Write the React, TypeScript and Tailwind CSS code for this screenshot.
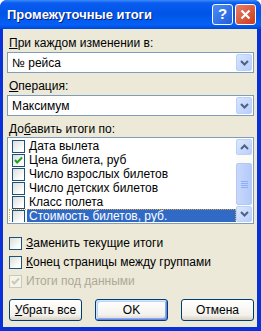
import React from "react";

const items = [
  { label: "Дата вылета", checked: false },
  { label: "Цена билета, руб", checked: true },
  { label: "Число взрослых билетов", checked: false },
  { label: "Число детских билетов", checked: false },
  { label: "Класс полета", checked: false },
  { label: "Стоимость билетов, руб.", checked: false, selected: true },
];

function Check({ color = "#21A121" }: { color?: string }) {
  return (
    <svg width="9" height="9" viewBox="0 0 9 9">
      <polyline points="1,4 3.2,6.5 8,1.5" fill="none" stroke={color} strokeWidth="2" />
    </svg>
  );
}

function Box({ checked, disabled }: { checked?: boolean; disabled?: boolean }) {
  return (
    <span
      className={
        "flex h-[13px] w-[13px] shrink-0 items-center justify-center border " +
        (disabled
          ? "border-[#CAC8BB] bg-[#F5F4EA]"
          : "border-[#1C5180] bg-[linear-gradient(135deg,#DCDCD7,#FFFFFF_80%)]")
      }
    >
      {checked && <Check color={disabled ? "#CAC8BB" : "#21A121"} />}
    </span>
  );
}

function Chevron({ up }: { up?: boolean }) {
  return (
    <svg width="9" height="6" viewBox="0 0 9 6">
      <polyline
        points={up ? "1,5 4.5,1.5 8,5" : "1,1 4.5,4.5 8,1"}
        fill="none"
        stroke="#4D6185"
        strokeWidth="2"
      />
    </svg>
  );
}

function Combo({ value }: { value: string }) {
  return (
    <div className="flex h-[21px] items-center border border-[#7F9DB9] bg-white pl-[4px] pr-[1px]">
      <span className="flex-1 text-[12px] leading-none text-black">{value}</span>
      <span className="flex h-[17px] w-[16px] items-center justify-center rounded-[2px] border border-[#BAD1FC] bg-[linear-gradient(135deg,#D6E4FE,#B9CEFB)]">
        <Chevron />
      </span>
    </div>
  );
}

function XpButton({ children, def }: { children: React.ReactNode; def?: boolean }) {
  return (
    <button
      className={
        "h-[22px] w-[73px] rounded-[3px] border border-[#003C74] bg-[linear-gradient(to_bottom,#FFFFFF,#F3F2EC_75%,#D6D0C5)] text-[12px] text-black " +
        (def ? "shadow-[inset_1px_1px_#CEE7FF,inset_-1px_-1px_#6982EE,inset_2px_2px_#BCD4F6,inset_-2px_-2px_#89ADE4]" : "")
      }
    >
      {children}
    </button>
  );
}

export default function App() {
  return (
    <div className="min-h-screen bg-white font-['Liberation_Sans',Arial,sans-serif]">
      <div className="flex h-[331px] w-[261px] flex-col overflow-hidden rounded-t-[7px] bg-[#0831D9]">
        {/* title bar */}
        <div className="flex h-[29px] shrink-0 items-center bg-[linear-gradient(to_bottom,#3C8CF8_0%,#0A5DF0_10%,#0054E6_45%,#0560F6_85%,#0048D8_100%)] pl-[7px] pr-[5px]">
          <span className="flex-1 text-[13px] font-bold text-white [text-shadow:1px_1px_0_#0A1E80]">
            Промежуточные итоги
          </span>
          <span className="flex h-[21px] w-[21px] items-center justify-center rounded-[3px] border border-white bg-[linear-gradient(135deg,#4C8DF5,#1F5EDB)] text-[15px] font-bold text-white">
            ?
          </span>
          <span className="ml-[2px] flex h-[21px] w-[21px] items-center justify-center rounded-[3px] border border-white bg-[linear-gradient(135deg,#E8806A,#CC3A18)]">
            <svg width="11" height="11" viewBox="0 0 11 11">
              <path d="M1.5 1.5 L9.5 9.5 M9.5 1.5 L1.5 9.5" stroke="white" strokeWidth="2.2" />
            </svg>
          </span>
        </div>

        {/* body */}
        <div className="mb-[4px] ml-[3px] mr-[4px] flex flex-1 flex-col bg-[#ECE9D8] pl-[4px] pr-[3px] pt-[7px] text-[12px] leading-[14px] text-black">
          <div className="pl-[2px]">
            <u>П</u>ри каждом изменении в:
          </div>
          <div className="mt-[2px]">
            <Combo value="№ рейса" />
          </div>
          <div className="mt-[6px] pl-[2px]">
            <u>О</u>перация:
          </div>
          <div className="mt-[2px]">
            <Combo value="Максимум" />
          </div>
          <div className="mt-[6px] pl-[2px]">
            До<u>б</u>авить итоги по:
          </div>
          <div className="mt-[1px] flex h-[87px] border border-[#7F9DB9] bg-white p-[1px]">
            <div className="flex-1 overflow-hidden">
              {items.map((it) => (
                <div
                  key={it.label}
                  className={
                    "flex h-[14px] items-center " +
                    (it.selected ? "outline outline-1 -outline-offset-1 outline-dotted outline-[#D9A441]" : "")
                  }
                >
                  <span className="pl-[3px] pr-[2px]">
                    <Box checked={it.checked} />
                  </span>
                  <span
                    className={
                      "flex h-full flex-1 items-center pl-[2px] " +
                      (it.selected ? "bg-[#316AC5] text-white" : "")
                    }
                  >
                    {it.label}
                  </span>
                </div>
              ))}
            </div>
            <div className="flex w-[16px] flex-col bg-[#FBFBF8]">
              <span className="flex h-[16px] items-center justify-center rounded-[2px] border border-[#BAD1FC] bg-[linear-gradient(135deg,#DDE8FE,#B9CEFB)]">
                <Chevron up />
              </span>
              <span className="h-[8px]" />
              <span className="flex h-[42px] flex-col items-center justify-center gap-[1px] rounded-[2px] border border-[#B4C8F6] bg-[linear-gradient(to_right,#C9D8FC,#B4CAF9)]">
                <span className="h-[1px] w-[7px] bg-[#8CB0F8]" />
                <span className="h-[1px] w-[7px] bg-[#8CB0F8]" />
                <span className="h-[1px] w-[7px] bg-[#8CB0F8]" />
                <span className="h-[1px] w-[7px] bg-[#8CB0F8]" />
              </span>
              <span className="flex-1" />
              <span className="flex h-[16px] items-center justify-center rounded-[2px] border border-[#BAD1FC] bg-[linear-gradient(135deg,#DDE8FE,#B9CEFB)]">
                <Chevron />
              </span>
            </div>
          </div>

          <div className="mt-[12px] flex flex-col gap-[5px] pl-[2px]">
            <label className="flex items-center gap-[4px]">
              <Box />
              <span>
                <u>З</u>аменить текущие итоги
              </span>
            </label>
            <label className="flex items-center gap-[4px]">
              <Box />
              <span>
                <u>К</u>онец страницы между группами
              </span>
            </label>
            <label className="flex items-center gap-[4px] text-[#ACA899]">
              <Box checked disabled />
              <span>Итоги под данными</span>
            </label>
          </div>

          <div className="mt-[11px] flex justify-between pl-[2px]">
            <XpButton>
              <u>У</u>брать все
            </XpButton>
            <XpButton def>OK</XpButton>
            <XpButton>Отмена</XpButton>
          </div>
        </div>
      </div>
    </div>
  );
}
